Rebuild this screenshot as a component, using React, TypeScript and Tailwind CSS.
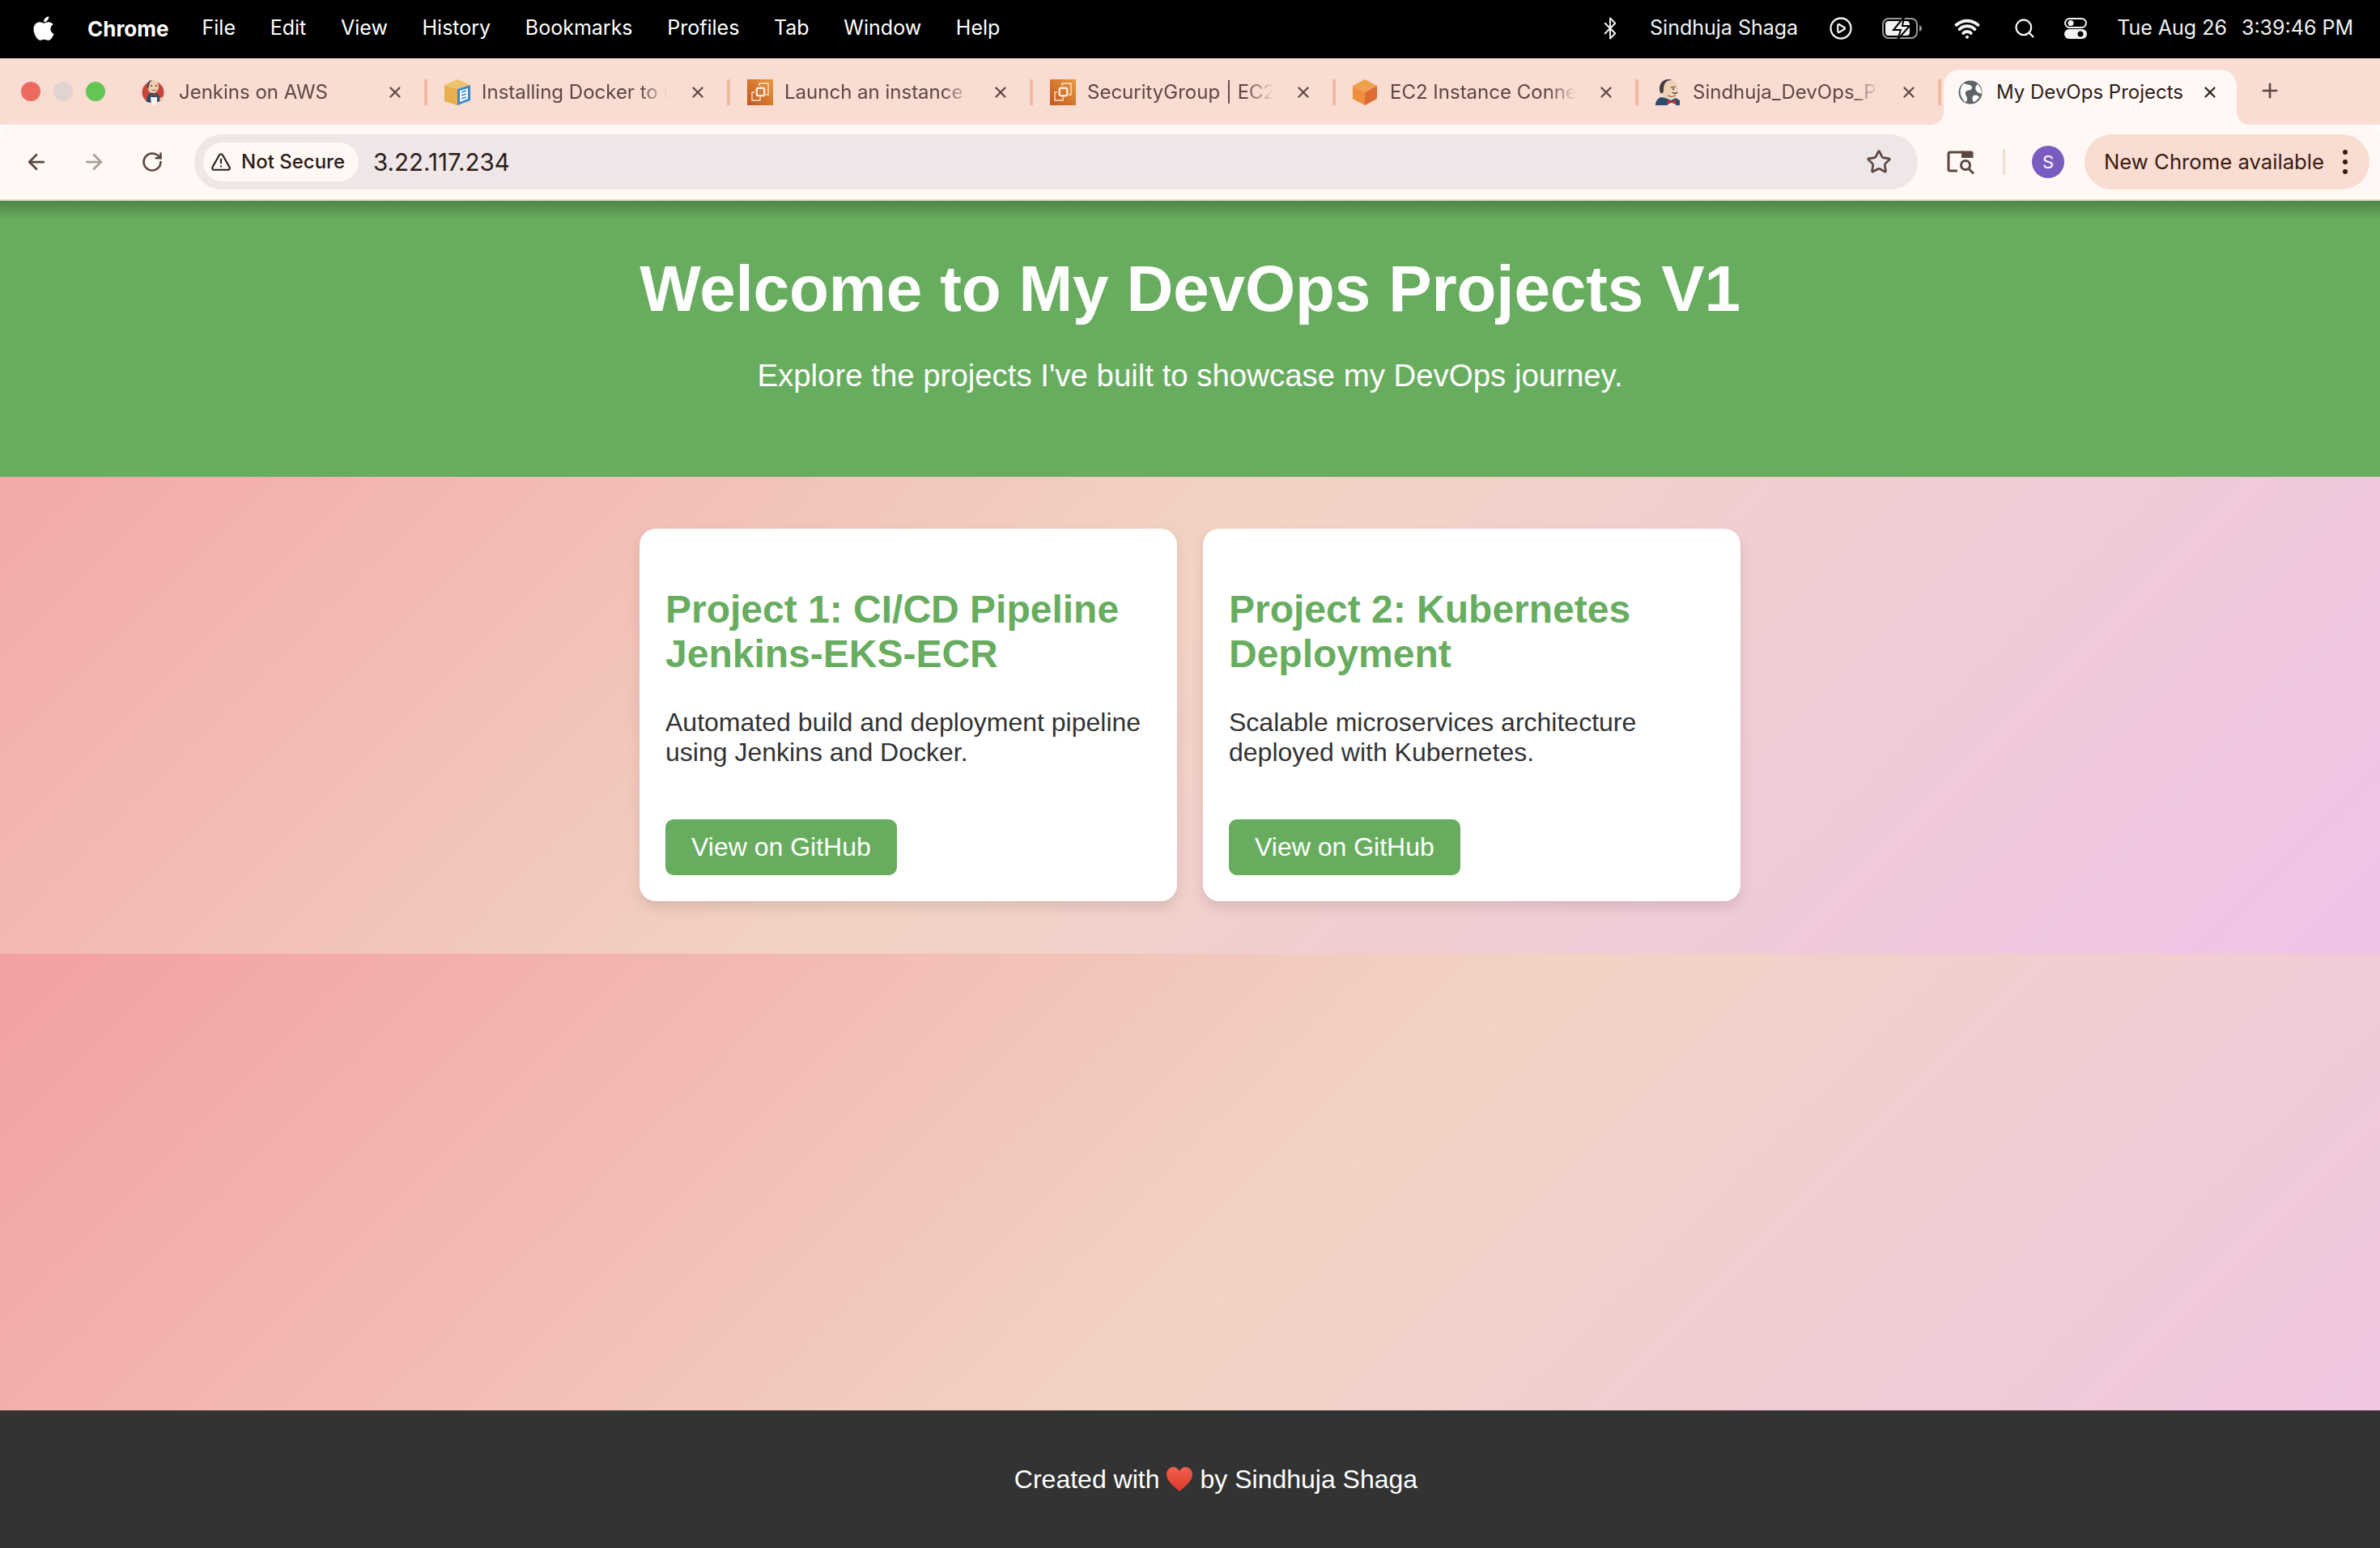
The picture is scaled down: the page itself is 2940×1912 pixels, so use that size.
import { ArrowLeft, ArrowRight, Bluetooth, CirclePlay, Plus, RotateCw, Search, Star, TriangleAlert, Wifi, X } from "lucide-react";
import { FaApple } from "react-icons/fa";
import type { ReactNode } from "react";

const MENU_ITEMS = ["File", "Edit", "View", "History", "Bookmarks", "Profiles", "Tab", "Window", "Help"];

function JenkinsBadgeIcon() {
  return (
    <svg viewBox="0 0 30 32" className="h-[32px] w-[30px] shrink-0">
      <circle cx="14" cy="16" r="13.500" fill="#c8453c" />
      <path d="M6 28c0-6 2-10 5-11h7c3 1 5 5 5 9l-3 2H7z" fill="#2f4a68" />
      <path d="M11 22h8v9l-7 1z" fill="#f7f4ee" />
      <path d="M22 23l4-1 1 4-4 1z" fill="#f1cdb0" />
      <path d="M11 18l3 2 4-2v3l-4-1-3 1z" fill="#c8352c" />
      <ellipse cx="14" cy="9" rx="7" ry="8" fill="#efcfb2" />
      <path d="M7 10C6 4 9 1 13 1c-3 2-4 5-4 9l-1 2z" fill="#4c4a4c" />
      <circle cx="12" cy="8" r="0.9" fill="#33241f" />
      <circle cx="18" cy="8" r="0.9" fill="#33241f" />
      <path d="M12 13q3 1.500 6 0" stroke="#8a4f3c" strokeWidth="0.9" fill="none" />
    </svg>
  );
}

function JenkinsHeadIcon() {
  return (
    <svg viewBox="0 0 30 32" className="h-[32px] w-[30px] shrink-0">
      <path d="M0 32c0-5 3-9 7-10l6 1 6 3 6-3 5 3v6z" fill="#2c4c6c" />
      <path d="M15 27l5 2 5-2v5H15z" fill="#f4f1ea" />
      <path d="M15 25l5 3 5-3v6l-5-2-5 2z" fill="#c8352c" />
      <ellipse cx="17" cy="12" rx="11" ry="12" fill="#efd2b6" />
      <path d="M6 17C3 8 7 0 16 0c2 0 3 0 4 1-7 0-10 4-10 12 0 3-1 5-4 4z" fill="#3f3f44" />
      <path d="M19 10l6-1M21 16q3 3 6 0" stroke="#4a3a32" strokeWidth="1.200" fill="none" />
      <circle cx="22" cy="12" r="1" fill="#33241f" />
      <path d="M15 20q5 3 10 0" stroke="#8a4f3c" strokeWidth="1" fill="none" />
    </svg>
  );
}

function DocsIcon() {
  return (
    <svg viewBox="0 0 32 32" className="h-[32px] w-[32px] shrink-0">
      <path d="M16 0l16 7-16 5L0 7z" fill="#efc36e" />
      <path d="M0 7l16 5v20L0 27z" fill="#e7af4e" />
      <path d="M16 12l16-5v19l-16 6z" fill="#3d88c9" />
      <path d="M19 14l10-3v13l-10 4z" fill="#fff" />
      <path d="M21 16l6-2M21 20l6-2M21 24l6-2" stroke="#3d88c9" strokeWidth="1.800" />
    </svg>
  );
}

function AwsIcon({ id }: { id: string }) {
  return (
    <svg viewBox="0 0 32 32" className="h-[32px] w-[32px] shrink-0">
      <defs>
        <linearGradient id={id} x1="0" y1="1" x2="1" y2="0">
          <stop offset="0" stopColor="#c0561f" />
          <stop offset="1" stopColor="#eb9a3e" />
        </linearGradient>
      </defs>
      <rect width="32" height="32" fill={`url(#${id})`} />
      <path d="M15 8V5h11v14h-3M16 22v4H6V16h3" fill="none" stroke="#f7e6d2" strokeWidth="1.400" />
      <rect x="12" y="11" width="9" height="9" fill="none" stroke="#fff" strokeWidth="1.600" />
      <path d="M14 9v2M16.500 9v2M19 9v2M14 20v2M16.500 20v2M19 20v2M10 13h2M10 15.500h2M10 18h2M21 13h2M21 15.500h2M21 18h2" stroke="#fff" strokeWidth="0.900" />
    </svg>
  );
}

function CubeIcon() {
  return (
    <svg viewBox="0 0 30 32" className="h-[32px] w-[30px] shrink-0">
      <path d="M15 0l15 8-15 8L0 8z" fill="#f0a14c" />
      <path d="M0 8l15 8v16L0 24z" fill="#ef8f3c" />
      <path d="M30 8L15 16v16l15-8z" fill="#dd6b34" />
    </svg>
  );
}

function GlobeIcon() {
  return (
    <svg viewBox="0 0 30 32" className="h-[32px] w-[30px] shrink-0">
      <circle cx="15" cy="16" r="14.500" fill="#5f6368" />
      <path d="M7 5c3 2 7 1 9 3s1 4-1 5-5 0-6 3 2 5 2 8-1 4-2 4C3 24-1 12 7 5zM24 6c3 3 5 7 5 11-2 1-4 0-6-2s-3-6 1-9zM19 20c3-1 6 0 7 2-2 3-4 5-7 6-2-2-2-7 0-8z" fill="#fff" />
    </svg>
  );
}

function Tab({ icon, title }: { icon: ReactNode; title: string }) {
  return (
    <div className="flex h-[68px] w-[374px] shrink-0 items-center pb-[13px] pl-[18px] text-[24px] text-[#5c4741]">
      <div className="w-[32px] shrink-0">{icon}</div>
      <span className="ml-[14px] w-[230px] overflow-hidden whitespace-nowrap [mask-image:linear-gradient(to_right,black_85%,transparent)]">
        {title}
      </span>
      <X className="ml-[26px] h-[22px] w-[22px] shrink-0" strokeWidth={2.4} />
      <div className="ml-[25px] h-[32px] w-[4px] shrink-0 bg-[#f3b9a2]" />
    </div>
  );
}

function ActiveTab() {
  return (
    <div className="relative flex h-[68px] w-[362px] shrink-0 items-center rounded-t-[20px] bg-[#fff8f5] pb-[13px] pl-[18px] text-[24px] text-[#2b1d1a]">
      <svg viewBox="0 0 16 16" className="absolute bottom-0 left-[-16px] h-[16px] w-[16px]">
        <path d="M16 0v16H0c9 0 16-7 16-16z" fill="#fff8f5" />
      </svg>
      <svg viewBox="0 0 16 16" className="absolute bottom-0 right-[-16px] h-[16px] w-[16px]">
        <path d="M0 0v16h16C7 16 0 9 0 0z" fill="#fff8f5" />
      </svg>
      <GlobeIcon />
      <span className="ml-[17px] w-[228px] whitespace-nowrap">My DevOps Projects</span>
      <X className="ml-[25px] h-[22px] w-[22px] shrink-0" strokeWidth={2.4} />
    </div>
  );
}

function BatteryIcon() {
  return (
    <svg viewBox="0 0 50 30" className="h-[30px] w-[50px]">
      <rect x="1" y="3" width="42" height="24" rx="7" fill="none" stroke="#9a9a9a" strokeWidth="2" />
      <rect x="4" y="6" width="30" height="18" rx="4" fill="#f2f2f2" />
      <path d="M46 11c2 1 3 2 3 4s-1 3-3 4z" fill="#9a9a9a" />
      <path d="M27 1L14 17h9l-4 12 15-17h-9z" fill="#f2f2f2" stroke="#000" strokeWidth="2" />
    </svg>
  );
}

function ControlIcon() {
  return (
    <svg viewBox="0 0 28 28" className="h-[28px] w-[28px]">
      <rect x="1" y="2" width="26" height="11" rx="5.500" fill="none" stroke="#f2f2f2" strokeWidth="2" />
      <circle cx="8" cy="7.500" r="3.500" fill="#f2f2f2" />
      <rect x="0" y="15" width="28" height="12" rx="6" fill="#f2f2f2" />
      <circle cx="20" cy="21" r="3.500" fill="#000" />
    </svg>
  );
}

function TabSearchIcon() {
  return (
    <svg viewBox="0 0 36 30" className="h-[30px] w-[36px] text-[#5c4741]">
      <path d="M14 26H5a2 2 0 0 1-2-2V5a2 2 0 0 1 2-2h16" fill="none" stroke="currentColor" strokeWidth="3" />
      <path d="M19 1.500h12a2.500 2.500 0 0 1 2.500 2.500v6H19z" fill="currentColor" />
      <circle cx="24" cy="19" r="5.500" fill="none" stroke="currentColor" strokeWidth="3" />
      <path d="M28 23.500l6 6" stroke="currentColor" strokeWidth="3" />
    </svg>
  );
}

function ProjectCard({ title, text }: { title: string; text: string }) {
  return (
    <article className="w-[664px] rounded-[20px] bg-white p-[32px] shadow-[0_8px_16px_rgba(0,0,0,0.1)]">
      <h2 className="mt-[40px] text-[48px] font-bold leading-[55px] text-[#68ad5f]">{title}</h2>
      <p className="mt-[39px] text-[32px] leading-[37px] text-[#333333]">{text}</p>
      <a className="mt-[64px] block w-fit rounded-[10px] bg-[#68ad5f] px-[32px] py-[16px] text-[32px] leading-[37px] text-white">
        View on GitHub
      </a>
    </article>
  );
}

export default function App() {
  return (
    <div className="flex h-[1912px] w-[2940px] flex-col overflow-hidden bg-white font-['Liberation_Sans',sans-serif]">
      <div className="font-['Inter',sans-serif]">
        <div className="flex h-[72px] items-center bg-black pb-[2px] pl-[40px] pr-[33px] text-[25px] text-white">
          <FaApple className="h-[34px] w-[28px]" />
          <span className="ml-[40px] text-[26px] font-bold">Chrome</span>
          <div className="ml-[41px] flex gap-[42.7px]">
            {MENU_ITEMS.map((item) => (
              <span key={item}>{item}</span>
            ))}
          </div>
          <div className="ml-auto flex items-center text-[#f2f2f2]">
            <Bluetooth className="h-[30px] w-[30px]" strokeWidth={1.6} />
            <span className="ml-[34px]">Sindhuja Shaga</span>
            <CirclePlay className="ml-[38px] h-[30px] w-[30px]" strokeWidth={1.8} />
            <span className="ml-[36px]"><BatteryIcon /></span>
            <Wifi className="ml-[39px] h-[32px] w-[32px]" strokeWidth={3} />
            <Search className="ml-[41px] h-[28px] w-[28px]" strokeWidth={2} />
            <span className="ml-[35px]"><ControlIcon /></span>
            <span className="ml-[37px]">Tue Aug 26</span>
            <span className="ml-[18px]">3:39:46 PM</span>
          </div>
        </div>

        <div className="flex h-[82px] items-end bg-[#f9dcd2]">
          <div className="flex h-[82px] w-[157px] shrink-0 items-center gap-[16px] pb-[1px] pl-[26px]">
            <span className="h-[24px] w-[24px] rounded-full bg-[#ed6a5e]" />
            <span className="h-[24px] w-[24px] rounded-full bg-[#dfd4ce]" />
            <span className="h-[24px] w-[24px] rounded-full bg-[#62c554]" />
          </div>
          <Tab icon={<JenkinsBadgeIcon />} title="Jenkins on AWS" />
          <Tab icon={<DocsIcon />} title="Installing Docker to use" />
          <Tab icon={<AwsIcon id="awsFillA" />} title="Launch an instance | EC2" />
          <Tab icon={<AwsIcon id="awsFillB" />} title="SecurityGroup | EC2 | us" />
          <Tab icon={<CubeIcon />} title="EC2 Instance Connect" />
          <Tab icon={<JenkinsHeadIcon />} title="Sindhuja_DevOps_Pipeline" />
          <ActiveTab />
          <Plus className="mb-[28px] ml-[27px] h-[28px] w-[28px] text-[#5c4741]" strokeWidth={2.2} />
        </div>

        <div className="flex h-[94px] items-start rounded-t-[16px] border-b-[2px] border-[#f0dcd6] bg-[#fff8f5] pt-[12px] text-[#5c4741]">
          <div className="flex h-[68px] w-[240px] shrink-0 items-center pl-[30px]">
            <ArrowLeft className="h-[30px] w-[30px]" strokeWidth={2.2} />
            <ArrowRight className="ml-[41px] h-[30px] w-[30px] text-[#aaa09c]" strokeWidth={2.2} />
            <RotateCw className="ml-[43px] h-[28px] w-[28px]" strokeWidth={2.2} />
          </div>
          <div className="flex h-[68px] w-[2129px] items-center rounded-full bg-[#efe6e7] pl-[11px] pr-[32px]">
            <div className="flex h-[48px] w-[192px] items-center rounded-full bg-[#fff8f5] pl-[9px] text-[24px] font-medium text-[#2b1d1a]">
              <TriangleAlert className="h-[26px] w-[26px]" strokeWidth={2} />
              <span className="ml-[12px] whitespace-nowrap">Not Secure</span>
            </div>
            <span className="ml-[18px] text-[29.5px] text-[#2b1d1a]">3.22.117.234</span>
            <Star className="ml-auto h-[32px] w-[32px]" strokeWidth={2} />
          </div>
          <div className="flex h-[68px] items-center">
            <span className="ml-[35px]"><TabSearchIcon /></span>
            <div className="ml-[34px] h-[32px] w-[3px] bg-[#f5ddd2]" />
            <div className="ml-[33px] flex h-[40px] w-[40px] items-center justify-center rounded-full bg-[#7a5bbf] text-[22px] text-white">S</div>
            <div className="ml-[25px] flex h-[68px] w-[352px] items-center rounded-full bg-[#f9dcd2] pl-[24px] text-[25.7px] text-[#3a1a10]">
              <span className="whitespace-nowrap">New Chrome available</span>
              <div className="ml-[23px] flex flex-col gap-[6px]">
                <span className="h-[6px] w-[6px] rounded-full bg-[#3a1a10]" />
                <span className="h-[6px] w-[6px] rounded-full bg-[#3a1a10]" />
                <span className="h-[6px] w-[6px] rounded-full bg-[#3a1a10]" />
              </div>
            </div>
          </div>
        </div>
      </div>

      <div className="flex flex-1 flex-col bg-[linear-gradient(135deg,#f3a0a2,#f2d3c4,#efc3e8)] bg-[length:100%_930px]">
        <header className="h-[341px] bg-[linear-gradient(to_bottom,#4e8747,#68ad5f_24px)] pt-[63px] text-center text-white">
          <h1 className="text-[80px] font-bold leading-[92px] tracking-[-0.12px]">Welcome to My DevOps Projects V1</h1>
          <p className="mt-[39px] text-[38.4px] leading-[44px]">Explore the projects I've built to showcase my DevOps journey.</p>
        </header>
        <main className="flex h-[589px] items-start justify-center gap-[32px] pt-[64px]">
          <ProjectCard title="Project 1: CI/CD Pipeline Jenkins-EKS-ECR" text="Automated build and deployment pipeline using Jenkins and Docker." />
          <ProjectCard title="Project 2: Kubernetes Deployment" text="Scalable microservices architecture deployed with Kubernetes." />
        </main>
        <footer className="mt-auto flex h-[170px] items-center justify-center bg-[#333333] pl-[64px] text-[32px] text-white">
          <span>Created with</span>
          <svg viewBox="0 0 32 30" className="mx-[9px] h-[30px] w-[32px]">
            <defs>
              <linearGradient id="heartFill" x1="0" y1="0" x2="0" y2="1">
                <stop offset="0" stopColor="#f2604c" />
                <stop offset="1" stopColor="#d8392c" />
              </linearGradient>
            </defs>
            <path d="M16 30C8 23 0 17 0 9c0-5 4-9 8.500-9 3 0 6 2 7.500 5 1.500-3 4.500-5 7.500-5C28 0 32 4 32 9c0 8-8 14-16 21z" fill="url(#heartFill)" />
          </svg>
          <span>by Sindhuja Shaga</span>
        </footer>
      </div>
    </div>
  );
}
